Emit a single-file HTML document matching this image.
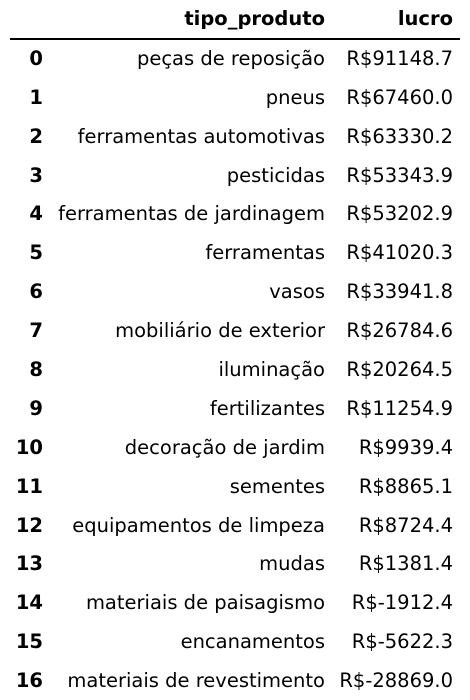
<!DOCTYPE html>
<html><head><meta charset="utf-8"><style>
body{margin:0;width:470px;height:700px;background:#fff;font-family:"DejaVu Sans",sans-serif;font-size:19.5px;color:#000;position:relative;overflow:hidden}
.r{position:absolute;left:0;width:470px;height:22px;line-height:22px}
.r span{position:absolute;white-space:nowrap}
.i{right:427px;font-weight:bold}
.t{right:145px}
.l{right:17px}
.h span{font-weight:bold}
.line{position:absolute;left:10px;width:450px;top:38px;height:2px;background:#000}
</style></head><body>
<div class="r h" style="top:8px"><span class="t">tipo_produto</span><span class="l">lucro</span></div>
<div class="line"></div>
<div class="r" style="top:48px"><span class="i">0</span><span class="t">peças de reposição</span><span class="l">R$91148.7</span></div>
<div class="r" style="top:87px"><span class="i">1</span><span class="t">pneus</span><span class="l">R$67460.0</span></div>
<div class="r" style="top:126px"><span class="i">2</span><span class="t">ferramentas automotivas</span><span class="l">R$63330.2</span></div>
<div class="r" style="top:165px"><span class="i">3</span><span class="t">pesticidas</span><span class="l">R$53343.9</span></div>
<div class="r" style="top:203px"><span class="i">4</span><span class="t">ferramentas de jardinagem</span><span class="l">R$53202.9</span></div>
<div class="r" style="top:242px"><span class="i">5</span><span class="t">ferramentas</span><span class="l">R$41020.3</span></div>
<div class="r" style="top:281px"><span class="i">6</span><span class="t">vasos</span><span class="l">R$33941.8</span></div>
<div class="r" style="top:320px"><span class="i">7</span><span class="t">mobiliário de exterior</span><span class="l">R$26784.6</span></div>
<div class="r" style="top:359px"><span class="i">8</span><span class="t">iluminação</span><span class="l">R$20264.5</span></div>
<div class="r" style="top:398px"><span class="i">9</span><span class="t">fertilizantes</span><span class="l">R$11254.9</span></div>
<div class="r" style="top:437px"><span class="i">10</span><span class="t">decoração de jardim</span><span class="l">R$9939.4</span></div>
<div class="r" style="top:476px"><span class="i">11</span><span class="t">sementes</span><span class="l">R$8865.1</span></div>
<div class="r" style="top:515px"><span class="i">12</span><span class="t">equipamentos de limpeza</span><span class="l">R$8724.4</span></div>
<div class="r" style="top:553px"><span class="i">13</span><span class="t">mudas</span><span class="l">R$1381.4</span></div>
<div class="r" style="top:592px"><span class="i">14</span><span class="t">materiais de paisagismo</span><span class="l">R$-1912.4</span></div>
<div class="r" style="top:631px"><span class="i">15</span><span class="t">encanamentos</span><span class="l">R$-5622.3</span></div>
<div class="r" style="top:670px"><span class="i">16</span><span class="t">materiais de revestimento</span><span class="l">R$-28869.0</span></div>
</body></html>
